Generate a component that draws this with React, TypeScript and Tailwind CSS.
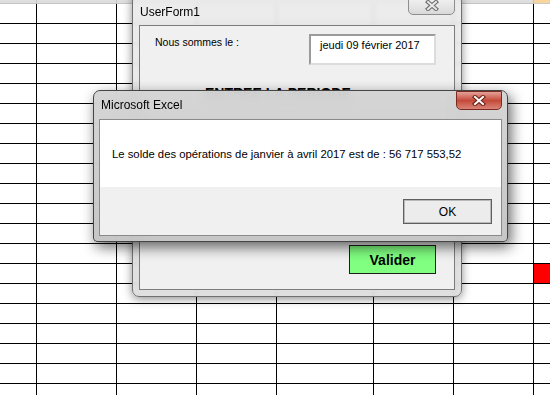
import React from 'react';

const ROWS = 20;
const COLS = 8;

// little chunky "x" used on the Win7 caption buttons
const CloseGlyph: React.FC<{ fill: string; outline: string }> = ({ fill, outline }) => (
  <svg width="14" height="11" viewBox="0 0 14 11">
    <path d="M3 2 L11 9 M11 2 L3 9" stroke={outline} strokeWidth="4.2" strokeLinecap="square" fill="none" />
    <path d="M3 2 L11 9 M11 2 L3 9" stroke={fill} strokeWidth="2" strokeLinecap="square" fill="none" />
  </svg>
);

const Sheet: React.FC = () => {
  const cells = [];
  for (let r = 0; r < ROWS; r++) {
    for (let c = 0; c < COLS; c++) {
      const red = r === 13 && c === 7;
      cells.push(
        <div
          key={`${r}-${c}`}
          className={
            red
              ? 'bg-[#ff0000] border-b border-black'
              : c === 7
                ? 'bg-white border-b border-black'
                : 'bg-white border-b border-r border-black'
          }
        />,
      );
    }
  }

  return (
    <div className="grid grid-cols-[37px_80px_80px_80px_97px_80px_80px_1fr] grid-rows-[4px] auto-rows-[20px]">
      {Array.from({ length: COLS }).map((_, c) => (
        <div
          key={`h-${c}`}
          className={
            c === 7
              ? 'bg-[#f7d59c] border-b border-[#c9c9c9]'
              : 'bg-[#dedede] border-b border-r border-[#c4c4c4]'
          }
        />
      ))}
      {cells}
    </div>
  );
};

const UserForm: React.FC = () => (
  <div className="absolute left-[132px] top-[-6px] flex h-[303px] w-[330px] flex-col rounded-[7px] border border-[#707070] bg-linear-to-b from-[#ebebeb]/90 to-[#dcdcdc]/90 px-[6px] pb-[6px] shadow-[0_2px_10px_rgba(0,0,0,0.45)] backdrop-blur-[2px]">
    <div className="flex h-[30px] shrink-0">
      <span className="pl-[1px] pt-[10px] text-[12px] leading-[14px] text-black">UserForm1</span>
      <div className="ml-auto mt-[1px] flex h-[19px] w-[47px] items-center justify-center rounded-b-[5px] border border-[#8e8e8e] bg-linear-to-b from-[#f4f4f4] to-[#d9d9d9]">
        <CloseGlyph fill="#e8e8e8" outline="#6e6e6e" />
      </div>
    </div>

    <div className="flex flex-1 flex-col border border-[#7d7d7d] bg-[#f0f0f0] text-black">
      <div className="flex pl-[15px] pr-[18px] pt-[8px]">
        <span className="mt-[1px] text-[10.5px] leading-[14px]">Nous sommes le :</span>
        <div className="ml-auto h-[31px] w-[127px] border-2 border-b-[#dcdcdc] border-l-[#9b9b9b] border-r-[#dcdcdc] border-t-[#9b9b9b] bg-white pl-[9px] pt-[2px] text-[11px] leading-[14px]">
          jeudi 09 février 2017
        </div>
      </div>

      <div className="ml-[65px] mt-[20px] text-[14px] font-bold leading-[16px]">ENTREE LA PERIODE</div>

      <div className="flex flex-1 items-end justify-end pb-[15px] pr-[18px]">
        <button className="h-[29px] w-[87px] border border-[#1e1e1e] bg-[#80ff80] text-[14px] font-bold leading-[16px] text-black">
          Valider
        </button>
      </div>
    </div>
  </div>
);

const MsgBox: React.FC = () => (
  <div className="absolute left-[93px] top-[90px] flex h-[152px] w-[415px] flex-col rounded-b-[4px] rounded-t-[7px] border border-[#454545] bg-linear-to-b from-[#d3d3d3]/95 to-[#c3c3c3]/95 px-[5px] pb-[5px] shadow-[3px_5px_14px_rgba(0,0,0,0.6)] backdrop-blur-[5px]">
    <div className="flex h-[28px] shrink-0 items-center">
      <span className="pl-[2px] text-[12px] leading-[14px] text-black">Microsoft Excel</span>
      <div className="ml-auto flex h-[19px] w-[46px] items-center justify-center self-start rounded-b-[5px] border border-[#7a2a20] bg-linear-to-b from-[#e4a197] via-[#c4493a] to-[#d98376]">
        <CloseGlyph fill="#ffffff" outline="#6a2119" />
      </div>
    </div>

    <div className="flex flex-1 flex-col border border-[#8a8a8a]">
      <div className="flex h-[67px] items-center bg-white pl-[12px] text-[11.3px] leading-[14px] text-black">
        Le solde des opérations de janvier à avril 2017 est de : 56 717 553,52
      </div>
      <div className="flex flex-1 items-start justify-end bg-[#f0f0f0] pr-[9px] pt-[12px]">
        <button className="h-[25px] w-[89px] border border-[#5f5f5f] bg-[#ececec] text-[12px] text-black shadow-[inset_0_0_0_1px_#b9b9b9]">
          OK
        </button>
      </div>
    </div>
  </div>
);

export default function App() {
  return (
    <div className="relative h-[395px] w-[550px] overflow-hidden bg-white font-['Liberation_Sans',Arial,sans-serif]">
      <Sheet />
      <UserForm />
      <MsgBox />
    </div>
  );
}
